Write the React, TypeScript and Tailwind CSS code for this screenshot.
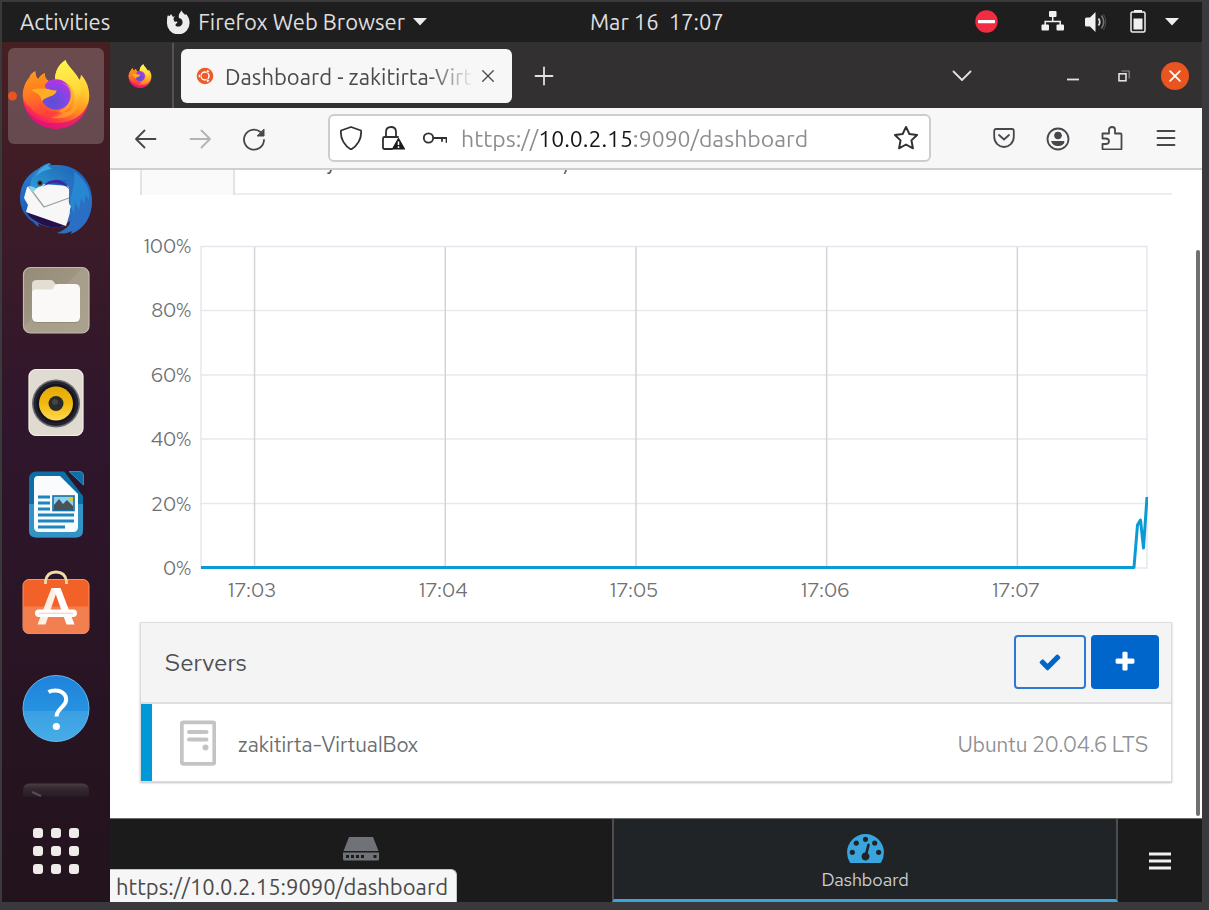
import type { ReactNode } from "react";

const UI = "font-['Ubuntu','Noto_Sans','Open_Sans',sans-serif]";
const PAGE = "font-['Red_Hat_Text','Inter',sans-serif]";

function FirefoxIcon({ id, className }: { id: string; className: string }) {
  return (
    <svg viewBox="13 11 70 71" className={className} aria-hidden="true">
      <defs>
        <linearGradient id={`${id}-body`} x1="0.8" y1="0.05" x2="0.25" y2="1">
          <stop offset="0" stopColor="#fff04a" />
          <stop offset="0.3" stopColor="#ffc52e" />
          <stop offset="0.55" stopColor="#ff8a1f" />
          <stop offset="0.78" stopColor="#ff3f40" />
          <stop offset="1" stopColor="#e5097c" />
        </linearGradient>
        <radialGradient id={`${id}-globe`} cx="0.4" cy="0.75" r="0.75">
          <stop offset="0" stopColor="#5a4fd0" />
          <stop offset="0.5" stopColor="#7a48e6" />
          <stop offset="1" stopColor="#b833e1" />
        </radialGradient>
        <linearGradient id={`${id}-head`} x1="0.2" y1="0" x2="0.4" y2="1">
          <stop offset="0" stopColor="#ff9a16" />
          <stop offset="0.5" stopColor="#ff7a22" />
          <stop offset="1" stopColor="#ff4039" />
        </linearGradient>
        <linearGradient id={`${id}-flame`} x1="0.5" y1="0" x2="0.6" y2="1">
          <stop offset="0" stopColor="#fff44f" />
          <stop offset="0.6" stopColor="#ffd93a" />
          <stop offset="1" stopColor="#ff9b24" />
        </linearGradient>
      </defs>
      <path
        d="M14.3 48C14.5 41 17 34 21 30C21.500 27.500 24 25 27 23.500C27 27 28 30 30 31.500C31.500 29 33.500 26.500 36.500 25.500C36.500 29 37.500 31 40 33L47 34C46.500 25 50 17 57.700 12C59.500 18 67 23 71.500 32C73 31 73 29 73.300 27C78.500 32 81.700 40 81.700 48C81.700 66.500 66.600 81.700 48 81.700C29.400 81.700 14.300 66.500 14.300 48Z"
        fill={`url(#${id}-body)`}
      />
      <path d="M15 55C20 70 33 76 48 76C64 76 76 68 81 55C78.500 71 65 81.700 48 81.700C31 81.700 17.500 70 15 55Z" fill="#e0107c" opacity="0.75" />
      <path
        d="M47 32C47 24 50 17 57.700 12C59 18 66 22 71 31C76 41 73 55 63 64C70 52 67 38 58 35C54 33 50 33 47 32Z"
        fill={`url(#${id}-flame)`}
      />
      <circle cx="48" cy="47" r="15.500" fill={`url(#${id}-globe)`} />
      <path d="M53 35C60 37 64 43 62 52C60 60 54 64 47 64C58 68 70 61 73 51C70 68 56 74 43 70C53 70 66 60 65 46C64 40 60 36 53 35Z" fill="#ffb52b" opacity="0.55" />
      <path
        d="M14.300 48C14.500 41 17 34 21 30C21.500 27.500 24 25 27 23.500C27 27 28 30 30 31.500C31.500 29 33.500 26.500 36.500 25.500C36.300 30 38 32 40 33.500C37 35 36 38 38 41C42 43 45 43 48.500 43C48 46.500 45 48.500 39 50C34 51 33 55 35 58C38 64 45 65 52 64C44 72 28 70 22 60Q15 56 14.300 48Z"
        fill={`url(#${id}-head)`}
      />
      <path d="M23 43C28 40 35 41 40 41.500C43 43 46 43 48.500 43C48 47 44 48 39 50C36 51 34 53 33.500 54C33 48 29 45 23 43Z" fill="#ffae22" />
    </svg>
  );
}

function ThunderbirdIcon() {
  return (
    <svg viewBox="0 0 96 96" className="size-24" aria-hidden="true">
      <defs>
        <linearGradient id="tb-body" x1="0.2" y1="0" x2="0.8" y2="1">
          <stop offset="0" stopColor="#2a7fd0" />
          <stop offset="0.5" stopColor="#1c5cb8" />
          <stop offset="1" stopColor="#3c78c4" />
        </linearGradient>
        <linearGradient id="tb-head" x1="0" y1="1" x2="1" y2="0">
          <stop offset="0" stopColor="#2f9ede" />
          <stop offset="1" stopColor="#1d62ae" />
        </linearGradient>
      </defs>
      <path
        d="M42 13C36 14 33 17 30 19C18 25 12 36 12 48C12 58 17 67 25 72C27 74 29 76 31 77L30 73C36 77 48 79 56 76L63 70L68 80L62 84C76 79 84 66 84 50C84 30 69 15 50 15C46 15 44 15 43 15Z"
        fill="url(#tb-body)"
      />
      <path d="M18 62L58 75L52 77C40 79 30 73 22 67Z" fill="#25104c" />
      <path d="M19 37L34 34L62 36L61 48L64 56L58 76L18 62L20 55L16 48Z" fill="#f7f7f7" />
      <path d="M21 37L36 57L61 48" fill="none" stroke="#a0a0a0" strokeWidth="1.300" />
      <path d="M34 37C42 31 56 32 62 40C58 33 52 28 45 28Z" fill="#3a2a9e" />
      <path d="M45 28C56 27 63 34 61 46C61 50 60 54 63 56C60 62 64 68 61 75C58 79 54 81 49 83C56 84.500 60 83 64 81L63 84C78 78 84 65 84 50C83 38 74 24 64 20C70 30 60 34 45 28Z" fill="#2a6fc4" />
      <path d="M66 22C77 30 83 39 81 51L78 44L76 54L73 48L71 60L67 52L66 64L62 54C62 44 68 36 66 22Z" fill="#2697d8" opacity="0.6" />
      <path d="M42 13C34 15 26 21 23 31C22 36 22 39 25 42C28 38 30 37 34 36C38 31 44 29 58 30C64 31 67 28 66 24C62 20 50 16 41 15Z" fill="url(#tb-head)" />
      <path d="M42 13C36 15 30 20 28 26C34 21 40 19 44 19L40 16Z" fill="#49b8ea" opacity="0.7" />
      <path d="M22 36C22 40 23 42 25 43L28 38Z" fill="#8fd0e6" />
      <circle cx="32" cy="33" r="2.600" fill="#4b3a2a" />
      <circle cx="32" cy="33" r="1.300" fill="#111" />
    </svg>
  );
}

function FilesIcon() {
  return (
    <svg viewBox="0 0 96 96" className="size-24" aria-hidden="true">
      <defs>
        <linearGradient id="files-bg" x1="0" y1="0" x2="1" y2="1">
          <stop offset="0" stopColor="#958b79" />
          <stop offset="0.45" stopColor="#9d9482" />
          <stop offset="0.46" stopColor="#a69d8b" />
          <stop offset="1" stopColor="#aaa18f" />
        </linearGradient>
      </defs>
      <rect x="15.500" y="15.500" width="65.500" height="65.500" rx="7" fill="url(#files-bg)" stroke="#c2bba9" strokeWidth="1.200" />
      <path d="M24 33Q24 28 29 28H43Q45 28 46 30L48 32H67Q72 32 72 37V65Q72 71 67 71H29Q24 71 24 65Z" fill="#7d7463" opacity="0.5" />
      <path d="M24 32Q24 28 29 28H43Q45 28 46 30L49 34V50H24Z" fill="#e2ded2" />
      <path d="M24 41Q24 37.500 28 37.500H43Q45 37.500 46 35L47 33Q48 32 50 32H67Q72 32 72 37V65Q72 70 67 70H29Q24 70 24 65Z" fill="#faf9f7" />
    </svg>
  );
}

function RhythmboxIcon() {
  return (
    <svg viewBox="0 0 96 96" className="size-24" aria-hidden="true">
      <defs>
        <linearGradient id="rb-cone" x1="0" y1="0" x2="0" y2="1">
          <stop offset="0" stopColor="#e3aa08" />
          <stop offset="0.5" stopColor="#f0b90e" />
          <stop offset="1" stopColor="#ffd94e" />
        </linearGradient>
      </defs>
      <rect x="21" y="15.500" width="54" height="66" rx="7" fill="#dfdbd1" stroke="#f3f1ec" strokeWidth="1.200" />
      <circle cx="48" cy="49.500" r="24" fill="#6d6c72" />
      <circle cx="48" cy="49.500" r="22.500" fill="#23222e" />
      <circle cx="48" cy="49.500" r="19.500" fill="#14131d" />
      <circle cx="48" cy="49.500" r="17" fill="url(#rb-cone)" />
      <circle cx="48" cy="49.500" r="7.500" fill="#2b2a2a" />
      <circle cx="47" cy="48" r="3" fill="#444" />
    </svg>
  );
}

function WriterIcon() {
  return (
    <svg viewBox="0 0 96 96" className="size-24" aria-hidden="true">
      <rect x="21" y="15.500" width="54" height="66" rx="7" fill="#0b6ea6" />
      <path d="M21 48H75V74.500Q75 81.500 68 81.500H28Q21 81.500 21 74.500Z" fill="#3293c6" />
      <path d="M55 14H77V38L75 40Z" fill="#2c152a" />
      <path d="M61 15.500H71Q75.500 15.500 75.500 20V29Z" fill="#0f6fa5" stroke="#2d90c4" strokeWidth="1" />
      <path d="M26 24Q26 20 30 20H52L70 38V71Q70 76 65 76H31Q26 76 26 71Z" fill="#f9fbfc" />
      <path d="M30 41H42M30 47H42M30 53H42M30 59H66M30 65H66M30 71H57" stroke="#1c85bf" strokeWidth="2.800" />
      <rect x="45" y="40" width="21" height="14.500" fill="#8fd0f0" stroke="#15719f" strokeWidth="1.600" />
      <path d="M60 41H65V45Q61 45 60 41Z" fill="#f3c21b" />
      <path d="M46 54V49L51 43L55 48L59 44L65 50V54Z" fill="#48525a" />
    </svg>
  );
}

function SoftwareIcon() {
  return (
    <svg viewBox="0 0 96 96" className="size-24" aria-hidden="true">
      <rect x="15" y="21.500" width="66" height="54" rx="6" fill="#f26128" stroke="#f9936a" strokeWidth="1" />
      <path d="M15 48.500H81V69.500Q81 75.500 75 75.500H21Q15 75.500 15 69.500Z" fill="#f17f4f" />
      <path d="M37.500 26V23Q39 14 48 14Q57 14 58.500 23V26" fill="none" stroke="#f0dda6" strokeWidth="2.800" />
      <path d="M43.500 30H50L37.500 66.500H29.500Z" fill="#fdeee6" />
      <path d="M45.500 30H52.500L66.500 66.500H58.500Z" fill="#fff" />
      <rect x="27" y="51.500" width="42" height="7.500" rx="3.700" fill="#fff" />
      <path d="M31 55.200H65" stroke="#f7c7b1" strokeWidth="1" />
    </svg>
  );
}

function HelpIcon() {
  return (
    <svg viewBox="0 0 96 96" className="size-24" aria-hidden="true">
      <defs>
        <linearGradient id="help-bg" x1="0" y1="0" x2="0" y2="1">
          <stop offset="0" stopColor="#1f82dc" />
          <stop offset="0.53" stopColor="#2692e0" />
          <stop offset="0.54" stopColor="#3c9fe2" />
          <stop offset="1" stopColor="#46ade9" />
        </linearGradient>
      </defs>
      <circle cx="48" cy="48.500" r="33" fill="url(#help-bg)" stroke="#64b7ee" strokeWidth="1" />
      <path d="M40.500 32C44 30 51 29.500 55 33C59.500 37 59 42 55 46L50.500 51Q48.500 53.500 48.500 56.500" fill="none" stroke="#fff" strokeWidth="4" />
      <circle cx="48.300" cy="66.500" r="3.600" fill="#fff" />
    </svg>
  );
}

function TerminalIcon() {
  return (
    <svg viewBox="0 0 96 36" className="h-9 w-24" aria-hidden="true">
      <defs>
        <linearGradient id="term-bg" x1="0" y1="0" x2="0" y2="1">
          <stop offset="0" stopColor="#4a3d44" />
          <stop offset="0.4" stopColor="#35282f" />
          <stop offset="1" stopColor="#2a1b25" />
        </linearGradient>
      </defs>
      <path d="M15 34.500V28Q15 21.500 22 21.500H74Q81 21.500 81 28V34.500Z" fill="url(#term-bg)" />
      <path d="M24 30L33 34" stroke="#5a4e55" strokeWidth="2" />
    </svg>
  );
}

function Stroke({ className, children, width = 1.8 }: { className: string; children: ReactNode; width?: number }) {
  return (
    <svg viewBox="0 0 24 24" className={className} fill="none" stroke="currentColor" strokeWidth={width} strokeLinecap="round" strokeLinejoin="round" aria-hidden="true">
      {children}
    </svg>
  );
}

function IconButton({ label, className, children }: { label: string; className: string; children: ReactNode }) {
  return (
    <button type="button" aria-label={label} className={`flex shrink-0 items-center justify-center ${className}`}>
      {children}
    </button>
  );
}

function TopBar() {
  return (
    <header className="grid h-10 shrink-0 grid-cols-[49%_1fr_auto] items-center bg-[#1e1e1e] text-[22px] leading-7 text-[#dfdfdf]">
      <div className="flex items-center pl-[18px]">
        <button type="button">Activities</button>
        <button type="button" className="ml-14 flex items-center gap-2">
          <svg viewBox="0 0 24 24" className="size-6" aria-hidden="true">
            <path d="M2 5C3 7 4 6 5 4L7 7L9 6C7 8 7 10 9 12C11 11 12 12 11 13C9 14 9 16 11 16.500C14 17 17 15 16.500 12C16.500 9.500 15 8.500 13 8C12 5 14 2 16 0.500C16 3 18 3 19 5L20 4C22 6 23.500 9 23.500 12A11.300 11.300 0 1 1 1 12C1 9 1 7 2 5Z" fill="#ececec" />
          </svg>
          <span>Firefox Web Browser</span>
          <svg viewBox="0 0 14 8" className="h-2 w-3.5" aria-hidden="true">
            <path d="M0 0H14L7 7.500Z" fill="#ececec" />
          </svg>
        </button>
      </div>
      <button type="button" className="justify-self-start whitespace-pre">{"Mar 16  17:07"}</button>
      <div className="flex items-center pr-[23px]">
        <svg viewBox="0 0 24 24" className="size-6" role="img" aria-label="Do not disturb">
          <circle cx="12.500" cy="11.500" r="11.200" fill="#f22c42" />
          <rect x="4" y="10" width="17" height="3.200" rx="0.600" fill="#fff" />
        </svg>
        <svg viewBox="0 0 24 24" className="ml-[42px] size-6" role="img" aria-label="Wired network">
          <g fill="#f0f0f0">
            <rect x="9" y="1" width="7.500" height="6" rx="1" />
            <rect x="1.500" y="14.500" width="7.500" height="6" rx="1" />
            <rect x="16.500" y="14.500" width="7.500" height="6" rx="1" />
          </g>
          <path d="M12.700 7V11.500M5.200 15V11.500H20.200V15" fill="none" stroke="#f0f0f0" strokeWidth="1.500" />
        </svg>
        <svg viewBox="0 0 24 24" className="ml-5 size-6" role="img" aria-label="Volume">
          <path d="M1 9Q1 7.500 2.500 7.500H6L11.500 2V22L6 16.500H2.500Q1 16.500 1 15Z" fill="#f0f0f0" />
          <path d="M14.500 8.500Q17 12 14.500 15.500" fill="none" stroke="#d8d8d8" strokeWidth="1.800" />
          <path d="M17.500 5.500Q22 12 17.500 18.500" fill="none" stroke="#777" strokeWidth="1.600" />
          <path d="M19.500 4Q24 12 19.500 20" fill="none" stroke="#4a4a4a" strokeWidth="1" />
        </svg>
        <svg viewBox="0 0 24 24" className="ml-[18px] size-6" role="img" aria-label="Battery">
          <path d="M8 0H16V2.500H8Z" fill="#f0f0f0" />
          <rect x="5" y="2" width="14" height="20" rx="1.500" fill="none" stroke="#f0f0f0" strokeWidth="1.500" />
          <rect x="7.500" y="8.500" width="9" height="11" fill="#f0f0f0" />
        </svg>
        <svg viewBox="0 0 14 8" className="ml-[15px] h-2 w-3.5" aria-hidden="true">
          <path d="M0 0H14L7 7.500Z" fill="#f0f0f0" />
        </svg>
      </div>
    </header>
  );
}

const launchers: { name: string; icon: ReactNode }[] = [
  { name: "Thunderbird Mail", icon: <ThunderbirdIcon /> },
  { name: "Files", icon: <FilesIcon /> },
  { name: "Rhythmbox", icon: <RhythmboxIcon /> },
  { name: "LibreOffice Writer", icon: <WriterIcon /> },
  { name: "Ubuntu Software", icon: <SoftwareIcon /> },
  { name: "Help", icon: <HelpIcon /> },
  { name: "Terminal", icon: <TerminalIcon /> },
];

function Dock() {
  return (
    <nav aria-label="Dock" className="flex w-[108px] shrink-0 flex-col items-center gap-1.5 bg-linear-to-b from-[#471f22] via-[#2f162c] via-45% to-[#22131c] pt-1.5">
      <button type="button" aria-label="Firefox" className="relative flex size-24 items-center justify-center rounded-md bg-white/20 pb-1">
        <FirefoxIcon id="dock" className="size-[70px]" />
        <span className="absolute top-1/2 left-0 size-[9px] -translate-y-1/2 rounded-full bg-[#e95420]" />
      </button>
      {launchers.map((item) => (
        <button key={item.name} type="button" aria-label={item.name}>
          {item.icon}
        </button>
      ))}
      <button type="button" aria-label="Show Applications" className="mt-6 grid grid-cols-3 gap-2">
        {Array.from({ length: 9 }, (_, i) => (
          <span key={i} className="size-2.5 rounded-[3px] bg-[#eeebe9]" />
        ))}
      </button>
    </nav>
  );
}

function TabStrip() {
  return (
    <div className="flex h-[66px] shrink-0 items-center bg-[#333031] pt-px text-[#e2e2e2]">
      <IconButton label="Firefox View" className="h-full w-16 border-r-2 border-[#545253] pr-0.5">
        <FirefoxIcon id="view" className="size-6" />
      </IconButton>
      <div className="ml-[7px] flex h-[54px] w-[331px] items-center rounded-md bg-[#f7f7f7] pr-2.5 pl-3.5 text-[#4a4a4a]">
        <svg viewBox="0 0 20 20" className="size-5 shrink-0" aria-hidden="true">
          <circle cx="10" cy="10" r="8.300" fill="#ee5a2a" />
          <circle cx="10" cy="10" r="4" fill="none" stroke="#fff" strokeWidth="1.500" />
          <g fill="#fff" stroke="#ee5a2a" strokeWidth="0.700">
            <circle cx="4.600" cy="10" r="1.500" />
            <circle cx="12.800" cy="5.200" r="1.500" />
            <circle cx="12.800" cy="14.800" r="1.500" />
          </g>
        </svg>
        <span className="ml-2.5 flex-1 overflow-hidden pt-0.5 text-[22px] leading-7 whitespace-nowrap mask-[linear-gradient(90deg,#000_82%,transparent)]">
          Dashboard - zakitirta-VirtualBox
        </span>
        <IconButton label="Close tab" className="size-7">
          <Stroke className="size-[18px]" width={1.800}>
            <path d="M5 5L19 19M19 5L5 19" />
          </Stroke>
        </IconButton>
      </div>
      <IconButton label="New tab" className="ml-4 size-8">
        <Stroke className="size-6">
          <path d="M12 3.500V20.500M3.500 12H20.500" />
        </Stroke>
      </IconButton>
      <div className="ml-auto flex items-center pr-[13px]">
        <IconButton label="List all tabs" className="size-8">
          <Stroke className="size-6">
            <path d="M3.500 7.500L12 16L20.500 7.500" />
          </Stroke>
        </IconButton>
        <IconButton label="Minimize" className="ml-[79px] size-8">
          <svg viewBox="0 0 12 12" className="size-3" aria-hidden="true">
            <path d="M0 9.500H12" stroke="currentColor" strokeWidth="1.800" />
          </svg>
        </IconButton>
        <IconButton label="Restore" className="ml-[19px] size-8">
          <svg viewBox="0 0 12 12" className="size-3" fill="none" aria-hidden="true">
            <rect x="1" y="3.800" width="7" height="7" stroke="currentColor" strokeWidth="1.600" />
            <path d="M3.500 1H11.200V8.500" stroke="#8c8a8b" strokeWidth="1.200" />
          </svg>
        </IconButton>
        <IconButton label="Close window" className="ml-[21px] size-7 rounded-full bg-[#e95420] text-white">
          <Stroke className="size-[18px]" width={2.400}>
            <path d="M5.500 5.500L18.500 18.500M18.500 5.500L5.500 18.500" />
          </Stroke>
        </IconButton>
      </div>
    </div>
  );
}

function Toolbar() {
  return (
    <div className="flex h-[62px] shrink-0 items-center border-b-2 border-[#cfcfcf] bg-[#f7f7f7] pr-[9px] pl-[9px] text-[#47464a]">
      <IconButton label="Back" className="h-10 w-[54px] pt-0.5">
        <Stroke className="size-6">
          <path d="M21.500 12H2M10.500 3.500L2 12L10.500 20.500" />
        </Stroke>
      </IconButton>
      <IconButton label="Forward" className="h-10 w-[54px] pt-0.5 text-[#b4b4b6]">
        <Stroke className="size-6">
          <path d="M2.500 12H22M13.500 3.500L22 12L13.500 20.500" />
        </Stroke>
      </IconButton>
      <IconButton label="Reload" className="h-10 w-[54px] pt-0.5">
        <Stroke className="size-6">
          <path d="M22 13A10 10 0 1 1 18.500 5" />
          <path d="M22 2.500V9H15.500Z" fill="currentColor" strokeWidth={1} />
        </Stroke>
      </IconButton>
      <div className="mr-[46px] ml-[47px] flex h-12 flex-1 items-center rounded-md border-2 border-[#cdcdcf] bg-white pr-0.5 text-[#303033]">
        <IconButton label="Tracking protection" className="h-9 w-[42px]">
          <Stroke className="size-6">
            <path d="M12 1L22 4.500C23 13 18 20 12 23.500C6 20 1 13 2 4.500Z" />
          </Stroke>
        </IconButton>
        <IconButton label="Connection is not secure" className="h-9 w-[42px]">
          <svg viewBox="0 0 24 26" className="h-[26px] w-6" fill="none" stroke="currentColor" strokeWidth="1.800" aria-hidden="true">
            <path d="M5 11V7Q5 2 10 2Q15 2 15 7V11M11 24H3.500Q2 24 2 22.500V13.500Q2 12 3.500 12H17" strokeLinecap="round" />
            <path d="M17.500 13.500L23.500 24H11.500Z" fill="#1b1b1d" strokeLinejoin="round" strokeWidth="1.200" stroke="#1b1b1d" />
            <path d="M17.500 16.500V20M17.500 21.300V23" stroke="#fff" strokeWidth="1.500" />
          </svg>
        </IconButton>
        <IconButton label="Saved passwords" className="h-9 w-[42px]">
          <Stroke className="size-6">
            <circle cx="5.500" cy="12" r="4.700" />
            <path d="M10.500 12H23.500V16M19 12V15" />
          </Stroke>
        </IconButton>
        <input
          aria-label="Address"
          defaultValue="https://10.0.2.15:9090/dashboard"
          className="ml-[5px] h-9 min-w-0 flex-1 bg-[linear-gradient(90deg,#8b8b90_80px,#151519_80px,#151519_174px,#8b8b90_174px)] bg-clip-text text-[23px] text-transparent outline-none"
        />
        <IconButton label="Bookmark this page" className="h-9 w-[42px]">
          <Stroke className="size-[26px]">
            <path d="M12 1.800L15.100 8.300L22.200 9.200L17 14.200L18.400 21.500L12 18L5.600 21.500L7 14.200L1.800 9.200L8.900 8.300Z" />
          </Stroke>
        </IconButton>
      </div>
      <IconButton label="Save to Pocket" className="h-10 w-[54px]">
        <Stroke className="size-6">
          <path d="M4 3H20Q21.800 3 21.800 5V10.500C21.800 17 17 21 12 21C7 21 2.200 17 2.200 10.500V5Q2.200 3 4 3Z" />
          <path d="M7 9L12 13.500L17 9" />
        </Stroke>
      </IconButton>
      <IconButton label="Account" className="h-10 w-[54px] pt-0.5">
        <Stroke className="size-6">
          <circle cx="12" cy="12" r="10.500" />
          <circle cx="12" cy="8.500" r="3.400" fill="currentColor" strokeWidth={1} />
          <path d="M6 14.500H18Q18 18.500 12 18.500Q6 18.500 6 14.500Z" fill="currentColor" strokeWidth={1} />
        </Stroke>
      </IconButton>
      <IconButton label="Extensions" className="h-10 w-[54px]">
        <Stroke className="size-6">
          <path d="M2.500 7.500H9V3.500Q9 1 12 1Q15 1 15 3.500V7.500H20.500Q21.500 7.500 21.500 8.500V22.500Q21.500 23.500 20.500 23.500H3.500Q2.500 23.500 2.500 22.500V18H5.500Q9 18 9 15.200Q9 12.500 5.500 12.500H2.500Z" />
        </Stroke>
      </IconButton>
      <IconButton label="Open application menu" className="h-10 w-[54px]">
        <Stroke className="size-6">
          <path d="M3.500 5H20.500M3.500 12H20.500M3.500 19H20.500" />
        </Stroke>
      </IconButton>
    </div>
  );
}

function MetricTabs() {
  return (
    <div className="h-[25px] shrink-0 overflow-hidden">
      <div role="tablist" className="-mt-9 flex h-[61px] border-b-2 border-[#ededed] text-[21px] leading-6 text-[#4d5258]">
        <button type="button" role="tab" aria-selected="true" aria-label="CPU" className="-mb-0.5 w-[95px] border-x-2 border-[#e3e3e3] bg-[#fafafa]" />
        <button type="button" role="tab" aria-selected="false" className="px-6 pt-4 pb-[19px]">Memory</button>
        <button type="button" role="tab" aria-selected="false" aria-label="Network" className="w-[130px]" />
        <button type="button" role="tab" aria-selected="false" className="px-6 pt-4 pb-[19px]">Disk I/O</button>
      </div>
    </div>
  );
}

const percentTicks = ["100%", "80%", "60%", "40%", "20%", "0%"];
const timeTicks = ["17:03", "17:04", "17:05", "17:06", "17:07"];

function UsageChart() {
  return (
    <section aria-label="CPU usage" className="mt-[39px] flex shrink-0 text-[20px] leading-6 text-[#6e7072]">
      <div className="flex h-[346px] w-[51px] shrink-0 flex-col justify-between text-right">
        {percentTicks.map((tick) => (
          <span key={tick}>{tick}</span>
        ))}
      </div>
      <div className="mt-[11px] mr-6 ml-2 min-w-0 flex-1">
        <svg viewBox="0 0 948 324" preserveAspectRatio="none" className="block h-[324px] w-full" role="img" aria-label="Usage over time">
          <path d="M1.500 65.500H947M1.500 130H947M1.500 194H947M1.500 258.500H947" stroke="#e6e9ee" strokeWidth="1.600" />
          <path d="M55.500 1V322M246 1V322M436.500 1V322M627 1V322M817.500 1V322" stroke="#d4d4d4" strokeWidth="1.500" />
          <path d="M2 1.500H947V323H2Z" fill="none" stroke="#e3e7ee" strokeWidth="1.500" />
          <path d="M2 322.500H934L937.500 280L940.500 275L943.500 303L947 252" fill="none" stroke="#0a9bd6" strokeWidth="3" strokeLinejoin="round" />
        </svg>
        <div className="mt-[9px] flex justify-between pr-[108px] pl-[29px]">
          {timeTicks.map((tick) => (
            <span key={tick} className="w-12 text-center">{tick}</span>
          ))}
        </div>
      </div>
    </section>
  );
}

function ServersPanel() {
  return (
    <section className="mt-5 shrink-0 border border-[#dcdcdc] bg-white shadow-[0_1px_2px_rgba(0,0,0,0.25)]">
      <div className="flex h-[81px] items-center gap-[5px] border-b-2 border-[#dedede] bg-[#f4f4f4] pr-3 pb-px pl-6">
        <h2 className="mr-auto pt-0.5 text-[24px] leading-7 text-[#4d4f52]">Servers</h2>
        <button type="button" aria-label="Edit servers" className="flex h-[54px] w-[72px] items-center justify-center rounded border-2 border-[#2b7ad2] text-[#0066cc]">
          <svg viewBox="0 0 1792 1792" className="size-6" fill="currentColor" aria-hidden="true">
            <path d="M1671 566q0 40-28 68l-724 724-136 136q-28 28-68 28t-68-28l-136-136-362-362q-28-28-28-68t28-68l136-136q28-28 68-28t68 28l294 295 656-657q28-28 68-28t68 28l136 136q28 28 28 68z" />
          </svg>
        </button>
        <button type="button" aria-label="Add server" className="flex h-[54px] w-[68px] items-center justify-center rounded bg-[#0066cc] text-white">
          <svg viewBox="0 0 1792 1792" className="size-6" fill="currentColor" aria-hidden="true">
            <path d="M1600 736v192q0 40-28 68t-68 28h-416v416q0 40-28 68t-68 28h-192q-40 0-68-28t-28-68v-416h-416q-40 0-68-28t-28-68v-192q0-40 28-68t68-28h416v-416q0-40 28-68t68-28h192q40 0 68 28t28 68v416h416q40 0 68 28t28 68z" />
          </svg>
        </button>
      </div>
      <a href="#zakitirta-VirtualBox" className="flex h-[77px] items-center border-l-[11px] border-[#0099d5] pr-[23px] pl-7 text-[21px] leading-7">
        <svg viewBox="0 0 36 46" className="h-[46px] w-9" aria-hidden="true">
          <rect x="1.800" y="2.300" width="32.500" height="41.500" rx="1.500" fill="none" stroke="#c4c4c4" strokeWidth="3.800" />
          <path d="M9 12H26.500M9 19.500H26.500" stroke="#c4c4c4" strokeWidth="4" strokeLinecap="round" />
          <circle cx="25.500" cy="27.500" r="3" fill="#c4c4c4" />
        </svg>
        <span className="ml-[22px] pt-1 text-[#6a6d70]">zakitirta-VirtualBox</span>
        <span className="ml-auto pt-1 text-[#8f9194]">Ubuntu 20.04.6 LTS</span>
      </a>
    </section>
  );
}

function BottomNav() {
  return (
    <nav aria-label="Cockpit" className="flex h-[84px] shrink-0 border-t border-[#6f6f6f] bg-[#1b1b1b]">
      <a href="#host" aria-label="Host" className="flex flex-1 justify-center pt-[18px]">
        <svg viewBox="0 0 38 24" className="h-6 w-[38px]" aria-hidden="true">
          <path d="M7 0H31L36.500 14H1.500Z" fill="#6f7377" />
          <path d="M1 15.500H37V22Q37 23.500 35.500 23.500H2.500Q1 23.500 1 22Z" fill="#6f7377" />
          <g fill="#1b1b1b">
            <rect x="4" y="18" width="3" height="3" />
            <rect x="9" y="18" width="3" height="3" />
            <rect x="14" y="18" width="3" height="3" />
            <rect x="19" y="18" width="3" height="3" />
            <rect x="31.500" y="18" width="3" height="3" />
          </g>
        </svg>
      </a>
      <a href="#dashboard" className="flex flex-1 flex-col items-center border-x-2 border-b-[3px] border-x-[#4b4d50] border-b-[#39a5dc] bg-[#212427] pt-[15px] text-[18px] leading-6 text-[#cfcfcf]">
        <svg viewBox="0 256 1792 1408" className="h-[29px] w-[37px] text-[#39a5dc]" fill="currentColor" aria-hidden="true">
          <path d="M384 1152q0-53-37.5-90.5t-90.5-37.5-90.5 37.5-37.5 90.5 37.5 90.5 90.5 37.5 90.5-37.5 37.5-90.5zm192-448q0-53-37.5-90.5t-90.5-37.5-90.5 37.5-37.5 90.5 37.5 90.5 90.5 37.5 90.5-37.5 37.5-90.5zm428 481l101-382q6-26-7.5-48.5t-38.5-29.5-48 6.5-30 39.5l-101 382q-60 5-107 43.5t-63 98.5q-20 77 20 146t117 89 146-20 89-117q16-60-6-117t-72-91zm660-33q0-53-37.5-90.5t-90.5-37.5-90.5 37.5-37.5 90.5 37.5 90.5 90.5 37.5 90.5-37.5 37.5-90.5zm-640-640q0-53-37.5-90.5t-90.5-37.5-90.5 37.5-37.5 90.5 37.5 90.5 90.5 37.5 90.5-37.5 37.5-90.5zm448 192q0-53-37.5-90.5t-90.5-37.5-90.5 37.5-37.5 90.5 37.5 90.5 90.5 37.5 90.5-37.5 37.5-90.5zm320 448q0 261-141 483-19 29-54 29h-1402q-35 0-54-29-141-221-141-483 0-182 71-348t191-286 286-191 348-71 348 71 286 191 191 286 71 348z" />
        </svg>
        <span className="mt-[5px]">Dashboard</span>
      </a>
      <button type="button" aria-label="Menu" className="flex w-[84px] items-center justify-center">
        <svg viewBox="0 0 22 18" className="h-[18px] w-[22px]" aria-hidden="true">
          <path d="M0 2H22M0 9H22M0 16H22" stroke="#f2f2f2" strokeWidth="3.200" />
        </svg>
      </button>
    </nav>
  );
}

export default function App() {
  return (
    <div className={`flex min-h-screen flex-col bg-[#3a3a3c] pt-0.5 pr-[7px] pb-2 pl-0.5 ${UI}`}>
      <TopBar />
      <div className="flex flex-1">
        <Dock />
        <div className="relative flex min-w-0 flex-1 flex-col">
          <TabStrip />
          <Toolbar />
          <main className={`relative flex flex-1 flex-col bg-white px-[30px] pb-9 ${PAGE}`}>
            <MetricTabs />
            <UsageChart />
            <ServersPanel />
            <div className="absolute top-20 right-0.5 bottom-0.5 w-1 rounded-full bg-[#707070]" />
          </main>
          <div className={PAGE}>
            <BottomNav />
          </div>
          <div role="status" className="absolute bottom-0 left-0 rounded-tr-md border-t border-r border-[#c4c4c4] bg-[#f6f6f6] pr-2 pl-1.5 pt-0.5 text-[22px] leading-[30px] text-[#4a4a4a]">
            https://10.0.2.15:9090/dashboard
          </div>
        </div>
      </div>
    </div>
  );
}
